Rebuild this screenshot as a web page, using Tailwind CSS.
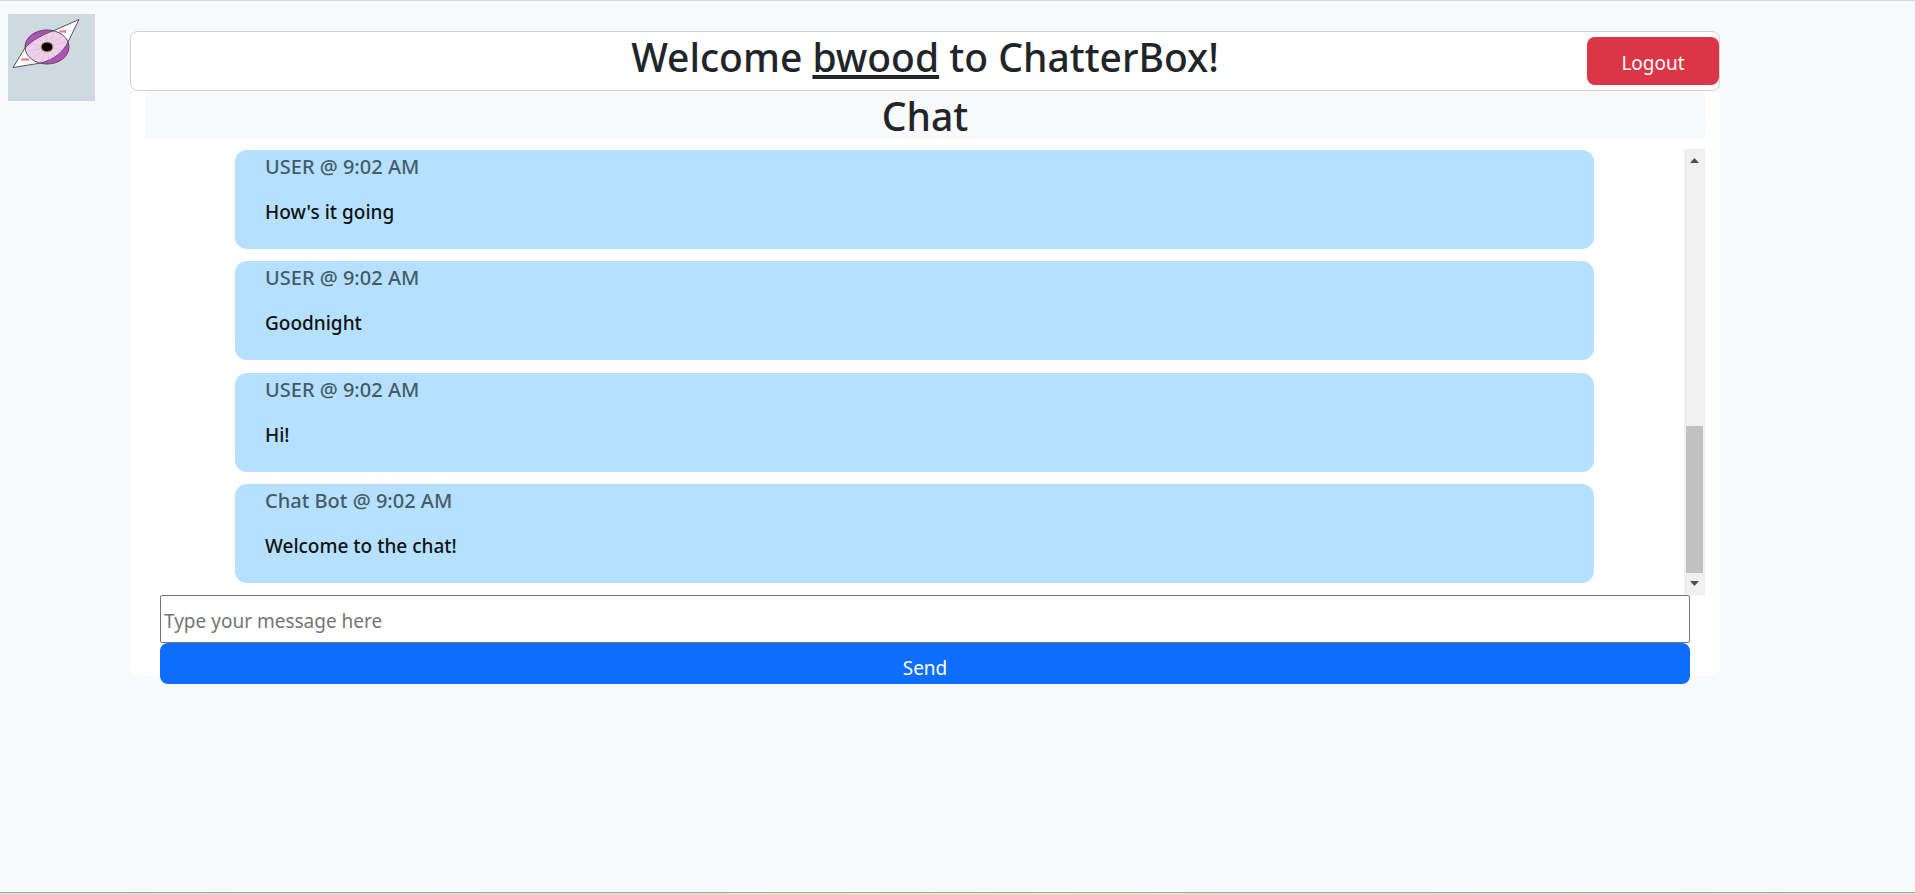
<!DOCTYPE html>
<html lang="en">
<head>
<meta charset="utf-8">
<meta name="viewport" content="width=device-width, initial-scale=1">
<title>ChatterBox</title>
<script src="https://cdn.jsdelivr.net/npm/@tailwindcss/browser@4"></script>
</head>
<body class="flex min-h-screen flex-col border-t border-[#d9dbde] bg-[#f8f9fb] font-['Noto_Sans','Open_Sans',sans-serif] text-[19px] leading-[30px] text-[#212529]">
  <div class="flex flex-1 items-start pl-2 pr-[195px]">
    <svg class="mt-[13px] size-[87px] shrink-0 bg-[#cfdae0]" viewBox="0 0 87 87" role="img" aria-label="ChatterBox logo">
      <defs>
        <clipPath id="eye"><ellipse cx="39" cy="33" rx="22" ry="17"/></clipPath>
      </defs>
      <ellipse cx="39" cy="33" rx="22" ry="17" fill="#b44fb8"/>
      <path d="M5 53.500L17 34C24 26 36 20 45 17L71 5.500L60 28C55 38 47 45 33 49Z" fill="#fff"/>
      <path d="M5 53.500L17 34C24 26 36 20 45 17L71 5.500L60 28C55 38 47 45 33 49Z" fill="#efcfe9" clip-path="url(#eye)"/>
      <g stroke="#d9b3e6" stroke-width="0.700" fill="none">
        <path d="M39 33L22 29M39 33L21 37M39 33L25 44M39 33L33 48M39 33L41 47M39 33L48 43M39 33L55 36M39 33L58 28M39 33L54 22M39 33L46 18M39 33L38 21M39 33L30 24"/>
      </g>
      <ellipse cx="39" cy="33" rx="22" ry="17" fill="none" stroke="#55465a"/>
      <path d="M5 53.500L17 34C24 26 36 20 45 17L71 5.500L60 28C55 38 47 45 33 49Z" fill="none" stroke="#555"/>
      <ellipse cx="39" cy="33" rx="6" ry="5" fill="#000" stroke="#d8b64a"/>
      <path d="M14 44v3M16 44v3M18 44v3M20 44v3M52 16v3M54 16v3M56 16v3M57.500 16v3M14 45.500h7M52 17.500h6" stroke="#f36b73"/>
    </svg>

    <main class="ml-[35px] mt-[30px] min-w-0 flex-1">
      <header class="grid h-[60px] grid-cols-[1fr_auto_1fr] items-center rounded-lg border border-[#d0d2d3] bg-white">
        <h1 class="col-start-2 -mt-2 text-[39px] font-medium leading-[48px]">Welcome <u class="decoration-4 underline-offset-[3px] [text-decoration-skip-ink:none]">bwood</u> to ChatterBox!</h1>
        <button type="button" class="h-12 w-[132px] justify-self-end rounded-lg bg-[#dc3545] pt-1 text-white">Logout</button>
      </header>

      <section class="h-[585px] rounded-lg bg-white px-[15px]">
        <h2 class="h-12 bg-[#f8f9fb] text-center text-[39px] font-medium leading-[50px]">Chat</h2>
        <div class="mt-[10px] flex h-[446px]">
          <ul class="flex flex-1 flex-col justify-between px-[90px] pb-3 pt-px font-medium">
            <li class="h-[99px] rounded-xl bg-[#b5e1ff] px-[30px] pt-0.5">
              <p class="mb-[15px] text-xl leading-[30px] text-[#455b69]">USER @ 9:02 AM</p>
              <p class="text-[#111]">How's it going</p>
            </li>
            <li class="h-[99px] rounded-xl bg-[#b5e1ff] px-[30px] pt-0.5">
              <p class="mb-[15px] text-xl leading-[30px] text-[#455b69]">USER @ 9:02 AM</p>
              <p class="text-[#111]">Goodnight</p>
            </li>
            <li class="h-[99px] rounded-xl bg-[#b5e1ff] px-[30px] pt-0.5">
              <p class="mb-[15px] text-xl leading-[30px] text-[#455b69]">USER @ 9:02 AM</p>
              <p class="text-[#111]">Hi!</p>
            </li>
            <li class="h-[99px] rounded-xl bg-[#b5e1ff] px-[30px] pt-0.5">
              <p class="mb-[15px] text-xl leading-[30px] text-[#455b69]">Chat Bot @ 9:02 AM</p>
              <p class="text-[#111]">Welcome to the chat!</p>
            </li>
          </ul>
          <!-- Scrollbar track with its arrows and thumb -->
          <div class="flex w-[21px] flex-col items-center justify-between bg-[#f0f0f0]" aria-hidden="true">
            <svg class="h-[22px] w-[9px]" viewBox="0 0 9 22"><path d="M0 14L4.500 9L9 14Z" fill="#4f4f4f"/></svg>
            <div class="mt-auto h-[147px] w-[17px] bg-[#c1c1c1]"></div>
            <svg class="h-[22px] w-[9px]" viewBox="0 0 9 22"><path d="M0 8L4.500 13L9 8Z" fill="#4f4f4f"/></svg>
          </div>
        </div>
        <form class="flex flex-col px-[15px]">
          <input type="text" aria-label="Message" placeholder="Type your message here" class="h-12 w-full rounded-xs border border-[#767676] bg-white px-[3px] pt-1 placeholder:text-[#757575]">
          <button type="button" class="h-[41px] w-full rounded-lg bg-[#0d6efd] pt-2 text-white">Send</button>
        </form>
      </section>
    </main>
  </div>
  <footer class="h-[3px] border-t border-[#aaa8a6] bg-linear-to-r from-[#e6d5d3] via-[#f1dfc8] to-[#e6d5d3]"></footer>
</body>
</html>
